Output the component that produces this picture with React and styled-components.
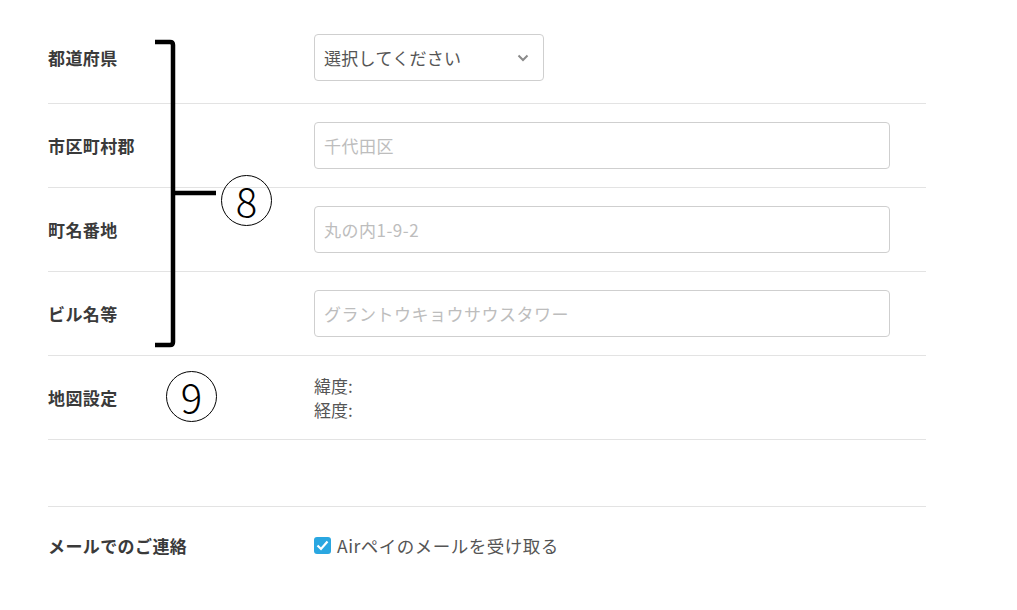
import React from 'react'
import styled, { createGlobalStyle } from 'styled-components'

const GlobalStyle = createGlobalStyle`
  html, body {
    margin: 0;
    padding: 0;
    background: #fff;
  }
  body {
    font-family: "Noto Sans CJK JP", "Noto Sans", sans-serif;
    color: #333;
  }
`

const Page = styled.div`
  position: relative;
  width: 1017px;
  height: 610px;
  overflow: hidden;
`

const Form = styled.div`
  width: 878px;
  margin-left: 48px;
  padding-top: 16px;
`

const Row = styled.div`
  display: grid;
  grid-template-columns: 266px 1fr;
  align-items: center;
  box-sizing: border-box;
  height: ${(p) => p.$height || 84}px;
  padding-bottom: ${(p) => p.$padBottom || 0}px;
  border-bottom: ${(p) => (p.$noLine ? 'none' : '1px solid #e3e3e3')};
`

const Spacer = styled.div`
  height: 67px;
  box-sizing: border-box;
  border-bottom: 1px solid #e3e3e3;
`

const Label = styled.div`
  font-size: 17px;
  font-weight: 700;
  color: #3a3a3a;
  letter-spacing: 0.4px;
`

const SelectBox = styled.div`
  box-sizing: border-box;
  width: 230px;
  height: 47px;
  border: 1px solid #cfcfcf;
  border-radius: 4px;
  display: flex;
  align-items: center;
  justify-content: space-between;
  padding: 0 14px 0 9px;
  font-size: 17px;
  color: #555;
  letter-spacing: 0.3px;
`

const TextInput = styled.input`
  box-sizing: border-box;
  width: 576px;
  height: 47px;
  border: 1px solid #cfcfcf;
  border-radius: 4px;
  padding: 0 9px;
  font-family: "Noto Sans CJK JP", "Noto Sans", sans-serif;
  font-size: 17px;
  letter-spacing: 0.5px;
  color: #555;
  outline: none;
  &::placeholder {
    color: #bdbdbd;
  }
`

const Coords = styled.div`
  font-size: 17px;
  line-height: 24px;
  color: #555;
`

const CheckLabel = styled.label`
  display: flex;
  align-items: center;
  gap: 6px;
  font-size: 17.5px;
  letter-spacing: 0.5px;
  color: #555;
`

const CheckBox = styled.span`
  width: 17px;
  height: 17px;
  border-radius: 3px;
  background: #2aa7e1;
  display: flex;
  align-items: center;
  justify-content: center;
`

const Bracket = styled.svg`
  position: absolute;
  left: 150px;
  top: 36px;
`

const Circled = styled.div`
  position: absolute;
  left: ${(p) => p.$x}px;
  top: ${(p) => p.$y}px;
  width: 51px;
  height: 51px;
  box-sizing: border-box;
  border: 1.5px solid #000;
  border-radius: 50%;
  display: flex;
  align-items: center;
  justify-content: center;
  padding-bottom: 2px;
  font-family: "Noto Sans CJK JP", "Noto Sans", sans-serif;
  font-weight: 300;
  font-size: 40px;
  line-height: 1;
  color: #000;
`

const Chevron = () => (
  <svg width="12" height="8" viewBox="0 0 12 8">
    <path d="M1.5 1.5 L6 6 L10.5 1.5" fill="none" stroke="#8a8a8a" strokeWidth="2" />
  </svg>
)

const Check = () => (
  <svg width="13" height="11" viewBox="0 0 13 11">
    <path d="M1.5 5.5 L5 9 L11.5 1.5" fill="none" stroke="#fff" strokeWidth="2.2" />
  </svg>
)

export default function App() {
  return (
    <Page>
      <GlobalStyle />
      <Form>
        <Row $height={88} $padBottom={4}>
          <Label>都道府県</Label>
          <SelectBox>
            <span>選択してください</span>
            <Chevron />
          </SelectBox>
        </Row>
        <Row>
          <Label>市区町村郡</Label>
          <TextInput placeholder="千代田区" />
        </Row>
        <Row>
          <Label>町名番地</Label>
          <TextInput placeholder="丸の内1-9-2" />
        </Row>
        <Row>
          <Label>ビル名等</Label>
          <TextInput placeholder="グラントウキョウサウスタワー" />
        </Row>
        <Row>
          <Label>地図設定</Label>
          <Coords>
            <div>緯度:</div>
            <div>経度:</div>
          </Coords>
        </Row>
        <Spacer />
        <Row $height={76} $noLine>
          <Label>メールでのご連絡</Label>
          <CheckLabel>
            <CheckBox>
              <Check />
            </CheckBox>
            Airペイのメールを受け取る
          </CheckLabel>
        </Row>
      </Form>

      <Bracket width="72" height="316" viewBox="0 0 72 316">
        <path
          d="M5 6 H20 Q23 6 23 9 V306 Q23 309 20 309 H5"
          fill="none"
          stroke="#000"
          strokeWidth="4.5"
        />
        <path d="M23 157 H66" fill="none" stroke="#000" strokeWidth="4.5" />
      </Bracket>
      <Circled $x={221} $y={175}>8</Circled>
      <Circled $x={166} $y={371}>9</Circled>
    </Page>
  )
}
